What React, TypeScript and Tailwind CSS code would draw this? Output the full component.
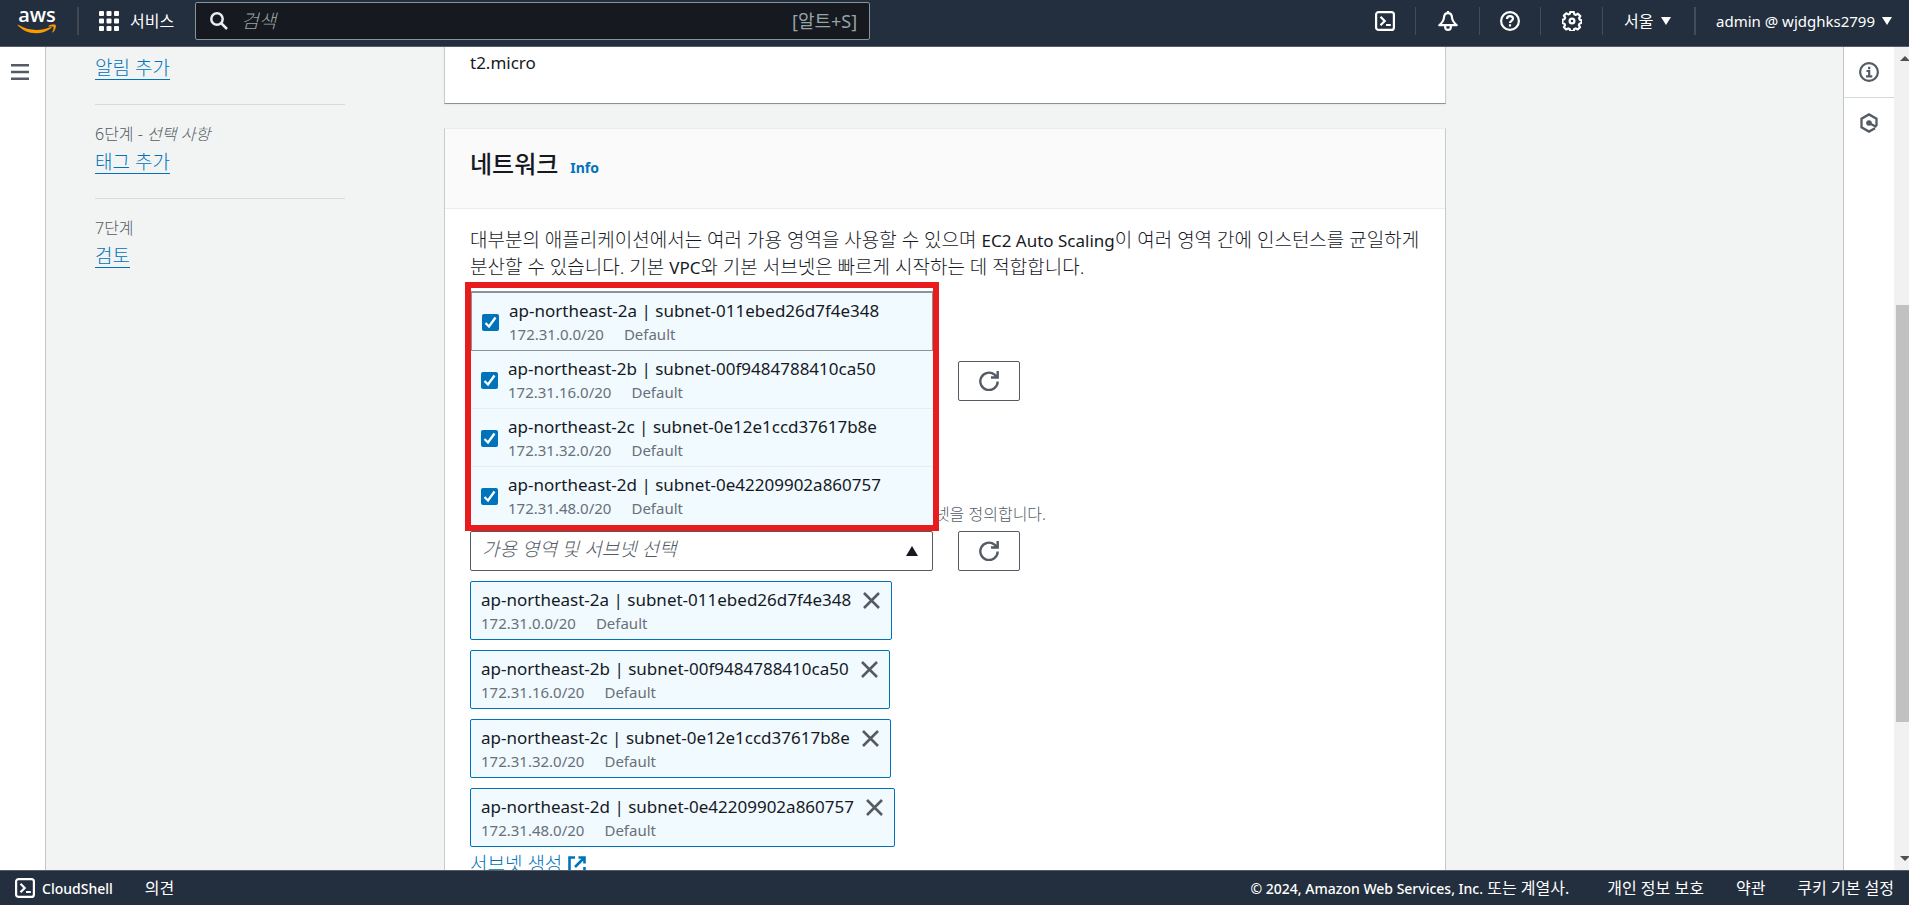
import React from 'react';

const KR = "font-['Noto_Sans','Noto_Sans_CJK_KR',sans-serif]";

const subnets = [
  { name: 'ap-northeast-2a | subnet-011ebed26d7f4e348', cidr: '172.31.0.0/20' },
  { name: 'ap-northeast-2b | subnet-00f9484788410ca50', cidr: '172.31.16.0/20' },
  { name: 'ap-northeast-2c | subnet-0e12e1ccd37617b8e', cidr: '172.31.32.0/20' },
  { name: 'ap-northeast-2d | subnet-0e42209902a860757', cidr: '172.31.48.0/20' },
];

function AwsLogo() {
  return (
    <span className="flex w-10 flex-col items-center">
      <span className="font-['Open_Sans',sans-serif] text-xl leading-4 font-semibold text-white">aws</span>
      <svg className="mt-px h-[11px] w-10" viewBox="0 0 40 11" fill="#ff9900" aria-hidden="true">
        <path d="M.6 1.3C.2 1 .6.4 1.2.8 7 4.200 13 6 19.500 6c4.800 0 9.700-1 14.200-3 .8-.3 1.400.5.7 1C30.300 7.300 24.300 9.300 19 9.300 11.500 9.300 5.300 6.300.6 1.300z" />
        <path d="M38.500 1c.9.900.1 5.200-2.600 7.400-.5.400-.9.200-.6-.4.600-1.500 1.700-4.300 1.200-5.100-.6-.8-3.700-.5-5-.3-.5.100-.6-.4-.1-.7C33.500.400 37.900.300 38.500 1z" />
      </svg>
    </span>
  );
}

function GridIcon() {
  return (
    <svg className="size-5" viewBox="0 0 20 20" fill="#fff" aria-hidden="true">
      {[0, 7.5, 15].map((y) =>
        [0, 7.5, 15].map((x) => <rect key={`${x}-${y}`} x={x} y={y} width="5" height="5" rx="1" />),
      )}
    </svg>
  );
}

function ShellIcon() {
  return (
    <svg className="size-5" viewBox="0 0 20 20" fill="none" stroke="currentColor" strokeWidth="2.2" aria-hidden="true">
      <rect x="1.100" y="1.100" width="17.800" height="17.800" rx="2.500" />
      <path d="M5.500 5.800l4.200 4.200-4.200 4.200M11 14h4.800" />
    </svg>
  );
}

function BellIcon() {
  return (
    <svg className="size-5" viewBox="0 0 20 20" fill="none" stroke="currentColor" strokeWidth="2.200" strokeLinejoin="round" aria-hidden="true">
      <path d="M10 2.200c-2.500 0-3.800 1.800-4 4.300-.3 3.300-1.700 5-4.700 7.700h17.400c-3-2.700-4.400-4.400-4.700-7.700-.2-2.500-1.500-4.300-4-4.300zM10 0v2.500M7.200 14.500v1.800a2.800 2.600 0 0 0 5.600 0v-1.800" />
    </svg>
  );
}

function HelpIcon() {
  return (
    <svg className="size-5" viewBox="0 0 20 20" fill="none" stroke="currentColor" strokeWidth="2.200" aria-hidden="true">
      <circle cx="10" cy="10" r="8.900" />
      <path d="M7 8c0-1.800 1.300-2.800 3-2.800s3 1 3 2.600c0 2-3 2.200-3 4.200M10 13.200v2.200" />
    </svg>
  );
}

function GearIcon() {
  return (
    <svg className="size-5" viewBox="0 0 20 20" fill="none" stroke="currentColor" strokeWidth="2.200" strokeLinejoin="round" aria-hidden="true">
      <path d="M8.300 1h3.400l.6 2.200 1.600.7 2-1.200 2.400 2.400-1.200 2 .7 1.600 1.700.5v2.600l-2 .9-.6 1.500 1.100 2.100-2.300 2.200-2-1.100-1.500.6-.6 2H8.300l-.6-2-1.500-.6-2 1.100-2.300-2.200L3 14.200l-.6-1.500-1.900-.7V8.800l2-.6.6-1.600-1.200-2 2.400-2.300 2 1.100 1.500-.6z" />
      <circle cx="10" cy="10" r="2.400" />
    </svg>
  );
}

function RefreshIcon() {
  return (
    <svg className="size-5" viewBox="0 0 20 20" fill="none" stroke="#545b64" strokeWidth="2.400" aria-hidden="true">
      <path d="M18.700 10.500A8.700 8.700 0 1 1 15.500 3.600l2.500 2.200M18.700 0v6.500H12" />
    </svg>
  );
}

function Caret({ up = false, className = '' }: { up?: boolean; className?: string }) {
  return (
    <svg className={className} viewBox="0 0 10 9" preserveAspectRatio="none" fill="currentColor" aria-hidden="true">
      <path d={up ? 'M5 0l5 9H0z' : 'M0 0h10L5 9z'} />
    </svg>
  );
}

function Header() {
  const cell = 'flex h-7 items-center border-l border-[#414d5c]';
  return (
    <header className="flex h-[47px] shrink-0 items-start border-b border-[#545b64] bg-[#232f3e] text-[15px] text-white">
      <div className="flex h-[42px] flex-1 items-center">
        <a href="#home" aria-label="aws" className="ml-[17px] block">
          <AwsLogo />
        </a>
        <span className="ml-5 h-7 w-0.5 bg-[#414750]" />
        <button type="button" className="ml-5 flex items-center gap-[11px] text-base leading-6">
          <GridIcon />
          서비스
        </button>
        <label className="ml-[21px] flex h-[38px] w-[675px] items-center rounded-xs border border-[#879596] bg-[#16191f] px-3">
          <svg className="ml-0.5 size-[18px]" viewBox="0 0 18 18" fill="none" stroke="#eaeded" strokeWidth="2.500" aria-hidden="true">
            <circle cx="7" cy="7" r="5.700" />
            <path d="M11 11l6 6" />
          </svg>
          <input
            type="search"
            aria-label="검색"
            placeholder="검색"
            className="ml-[13px] min-w-0 flex-1 bg-transparent text-[19px] font-light outline-none placeholder:text-[#95a5a6] placeholder:italic"
          />
          <span className="text-[18px] text-[#95a5a6]">[알트+S]</span>
        </label>
      </div>
      <div className="flex h-[42px] items-center">
        <button type="button" aria-label="CloudShell" className="flex h-7 w-[60px] items-center justify-center"><ShellIcon /></button>
        <button type="button" aria-label="알림" className={`${cell} w-16 justify-center`}><BellIcon /></button>
        <button type="button" aria-label="도움말" className={`${cell} w-[61px] justify-center`}><HelpIcon /></button>
        <button type="button" aria-label="설정" className={`${cell} w-[62px] justify-center`}><GearIcon /></button>
        <button type="button" className={`${cell} w-[92px] gap-2 pl-[21px] text-base`}>
          서울 <Caret className="h-2 w-[10px]" />
        </button>
        <button type="button" className={`${cell} gap-[7px] border-l-2 pr-[17px] pl-5`}>
          admin @ wjdghks2799 <Caret className="h-2 w-[10px]" />
        </button>
      </div>
    </header>
  );
}

function Step({ label, optional, title }: { label?: string; optional?: boolean; title: string }) {
  return (
    <li className="border-b border-[#d5dbdb] pb-[23px] last:border-0">
      {label && (
        <div className="pt-4 text-base leading-[27px] font-light text-[#545b64]">
          {label}
          {optional && <> - <i>선택 사항</i></>}
        </div>
      )}
      <a href="#step" className="inline-block border-b border-[#0073bb] pt-[3px] text-[19px] leading-[22px] font-light text-[#0073bb]">
        {title}
      </a>
    </li>
  );
}

function SubnetText({ name, cidr }: { name: string; cidr: string }) {
  return (
    <span className="block">
      <span className="block text-[17px] leading-[25px] text-[#16191f]">{name}</span>
      <span className="flex gap-5 text-[15px] leading-[23px] text-[#687078]">
        <span>{cidr}</span>
        <span>Default</span>
      </span>
    </span>
  );
}

function Dropdown() {
  return (
    <div className="absolute -top-[249px] -left-[5px] h-[249px] w-[474px] border-6 border-[#e81c1c] bg-white pt-[3px] font-normal">
      <ul className="border-t border-[#879596]">
        {subnets.map((s, i) => (
          <li key={s.name} className={i === 0 ? 'border border-[#879596]' : i === 3 ? '' : 'border-b border-[#eaeded]'}>
            <label className="flex h-[57px] items-center gap-[10px] bg-[#f1faff] pt-px pl-[10px]">
              <span className="relative flex size-[17px]">
                <input type="checkbox" defaultChecked className="size-[17px] appearance-none rounded-xs bg-[#0073bb]" />
                <svg className="pointer-events-none absolute inset-0 size-[17px]" viewBox="0 0 17 17" fill="none" stroke="#fff" strokeWidth="2.300" aria-hidden="true">
                  <path d="M3.500 9l3.500 3.500 6.500-9" />
                </svg>
              </span>
              <SubnetText {...s} />
            </label>
          </li>
        ))}
      </ul>
    </div>
  );
}

function RefreshButton() {
  return (
    <button type="button" aria-label="새로 고침" className="flex h-10 w-[62px] items-center justify-center rounded-xs border border-[#545b64] bg-white">
      <RefreshIcon />
    </button>
  );
}

function Token({ name, cidr }: { name: string; cidr: string }) {
  return (
    <li className="flex h-[59px] items-start gap-3 rounded-xs border border-[#0073bb] bg-[#f1faff] pt-[5px] pr-[11px] pl-[10px]">
      <SubnetText name={name} cidr={cidr} />
      <button type="button" aria-label="제거" className="mt-[5px]">
        <svg className="size-[17px]" viewBox="0 0 17 17" fill="none" stroke="#545b64" strokeWidth="2.600" aria-hidden="true">
          <path d="M1 1l15 15M16 1L1 16" />
        </svg>
      </button>
    </li>
  );
}

function Latin({ children }: { children: React.ReactNode }) {
  return <span className="text-[17px] font-normal">{children}</span>;
}

const cardEdge = 'border-x border-[#c6cccd] bg-white';

export default function App() {
  return (
    <div className={`flex h-screen flex-col overflow-hidden bg-[#f2f3f3] text-[#16191f] ${KR}`} lang="ko">
      <Header />
      <div className="flex min-h-0 flex-1">
        <aside className="w-[46px] shrink-0 border-r border-[#c1c7c7] bg-white pt-[17px] pl-[11px]">
          <button type="button" aria-label="메뉴" className="block">
            <svg className="h-4 w-[18px]" viewBox="0 0 18 16" stroke="#545b64" strokeWidth="2.400" aria-hidden="true">
              <path d="M0 1.200h18M0 8h18M0 14.800h18" />
            </svg>
          </button>
        </aside>
        <main className="flex min-w-0 flex-1 overflow-hidden">
          <nav className="ml-[49px] w-[250px] shrink-0">
            <ol className="pt-[7px]">
              <Step title="알림 추가" />
              <Step label="6단계" optional title="태그 추가" />
              <Step label="7단계" title="검토" />
            </ol>
          </nav>
          <div className="ml-[99px] w-[1002px] min-w-0">
            <section className={`${cardEdge} h-[57px] border-b border-b-[#879596] px-[25px] pt-0.5 text-[17px] leading-[27px] shadow-xs`}>
              t2.micro
            </section>
            <section className={`${cardEdge} mt-6 border-t border-t-[#eaeded]`}>
              <div className="flex h-20 items-baseline gap-3 border-b border-[#eaeded] bg-[#fafafa] px-[25px] pt-[17px]">
                <h2 className="text-2xl leading-9 font-medium">네트워크</h2>
                <a href="#info" className="text-[14px] font-bold text-[#0073bb]">Info</a>
              </div>
              <div className="px-[25px] pt-[18px] text-[19px] leading-[27px] font-light">
                <p>
                  대부분의 애플리케이션에서는 여러 가용 영역을 사용할 수 있으며 <Latin>EC2 Auto Scaling</Latin>이 여러 영역 간에 인스턴스를 균일하게 분산할 수 있습니다. 기본 <Latin>VPC</Latin>와 기본 서브넷은 빠르게 시작하는 데 적합합니다.
                </p>
                <div className="mt-20 flex justify-start pl-[488px]">
                  <RefreshButton />
                </div>
                <p className="mt-[100px] w-[576px] text-right text-base leading-[27px] text-[#545b64]">
                  서브넷을 정의합니다.
                </p>
                <div className="relative mt-[3px] flex gap-[25px]">
                  <button type="button" className="flex h-10 w-[463px] items-center justify-between rounded-xs border border-[#545b64] bg-white pr-[14px] pl-[11px] text-[#545b64]">
                    <i className="pb-1">가용 영역 및 서브넷 선택</i>
                    <Caret up className="h-[10px] w-3 text-[#16191f]" />
                  </button>
                  <RefreshButton />
                  <Dropdown />
                </div>
                <ul className="mt-[10px] flex flex-col items-start gap-[10px] font-normal">
                  {subnets.map((s) => <Token key={s.name} {...s} />)}
                </ul>
                <a href="#create" className="mt-1 flex items-center gap-[6px] text-[#0073bb]">
                  서브넷 생성
                  <svg className="size-[18px]" viewBox="0 0 18 18" fill="none" stroke="currentColor" strokeWidth="2.600" aria-hidden="true">
                    <path d="M7 1.500H1.500v15h15V11M10.500 1.500h6v6M16 2L7 11" />
                  </svg>
                </a>
              </div>
            </section>
          </div>
        </main>
        <aside className="w-[51px] shrink-0 border-l border-[#c1c7c7] bg-white text-[#545b64]">
          <button type="button" aria-label="정보" className="flex h-[51px] w-full items-center justify-center border-b border-[#d5dbdb]">
            <svg className="size-5" viewBox="0 0 20 20" fill="none" stroke="currentColor" strokeWidth="2.200" aria-hidden="true">
              <circle cx="10" cy="10" r="8.900" />
              <path d="M10.200 4.800v2.400M7.500 9h2.700v5.500M7 14.300h6.300" />
            </svg>
          </button>
          <button type="button" aria-label="진단" className="flex h-[49px] w-full items-center justify-center">
            <svg className="size-5" viewBox="0 0 20 20" fill="none" stroke="currentColor" strokeWidth="2.300" aria-hidden="true">
              <path d="M17.500 13V5.700L10 1.400 2.500 5.700v8.600l7.500 4.300 6-3.400M10 10l7.500 4" />
              <circle cx="10" cy="10" r="2.800" fill="currentColor" stroke="none" />
            </svg>
          </button>
        </aside>
        <div className="flex w-[15px] shrink-0 flex-col overflow-hidden bg-[#f1f1f1] pt-[9px] pb-[9px] pl-0.5 text-[#505050]">
          <Caret up className="ml-1 h-[5px] w-[10px] shrink-0" />
          <div className="mt-[244px] h-[417px] w-full bg-[#c1c1c1]" />
          <Caret className="mt-auto ml-1 h-[5px] w-[10px] shrink-0" />
        </div>
      </div>
      <footer className="flex h-[35px] shrink-0 items-center border-t border-[#545b64] bg-[#232f3e] pr-[15px] pl-[15px] text-base text-white">
        <button type="button" className="flex items-center gap-[7px] text-[14px] font-medium"><ShellIcon />CloudShell</button>
        <a href="#feedback" className="ml-8">의견</a>
        <span className="ml-auto"><span className="text-[14px] font-medium">© 2024, Amazon Web Services, Inc.</span> 또는 계열사.</span>
        <a href="#privacy" className="ml-[38px]">개인 정보 보호</a>
        <a href="#terms" className="ml-8">약관</a>
        <a href="#cookies" className="ml-8">쿠키 기본 설정</a>
      </footer>
    </div>
  );
}
